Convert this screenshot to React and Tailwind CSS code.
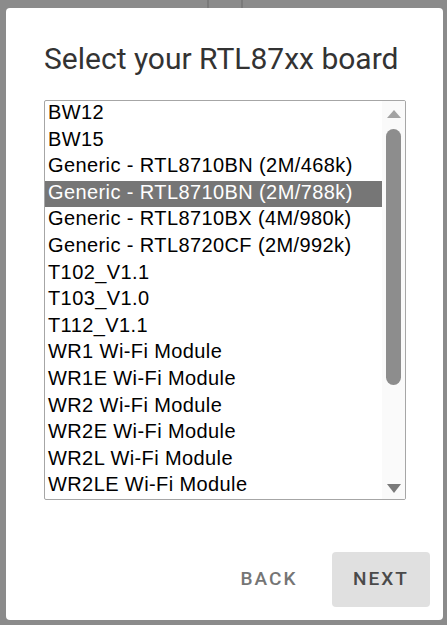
import React from 'react';

const boards = [
    'BW12',
    'BW15',
    'Generic - RTL8710BN (2M/468k)',
    'Generic - RTL8710BN (2M/788k)',
    'Generic - RTL8710BX (4M/980k)',
    'Generic - RTL8720CF (2M/992k)',
    'T102_V1.1',
    'T103_V1.0',
    'T112_V1.1',
    'WR1 Wi-Fi Module',
    'WR1E Wi-Fi Module',
    'WR2 Wi-Fi Module',
    'WR2E Wi-Fi Module',
    'WR2L Wi-Fi Module',
    'WR2LE Wi-Fi Module',
];

const selected = 'Generic - RTL8710BN (2M/788k)';

const App = () => {
    return (
        <div className="w-[447px] h-[625px] bg-[#8b8b8b] overflow-hidden flex flex-col">
            {/* page behind the overlay */}
            <div className="flex h-[8px] shrink-0">
                <div className="w-[207px]" />
                <div className="w-[2px] bg-[#7a7a7a]" />
                <div className="w-[32px]" />
                <div className="w-[2px] bg-[#7a7a7a]" />
            </div>

            <div className="ml-[6px] w-[437px] h-[612px] bg-white rounded-[4px] flex flex-col">
                <div className="px-[38px] pt-[33px]">
                    <h1 className="font-['Roboto',sans-serif] text-[30px] leading-[36px] text-[#333333] whitespace-nowrap">
                        Select your RTL87xx board
                    </h1>

                    <div className="mt-[23px] w-[362px] h-[400px] border border-[#a6a6a6] rounded-[2px] flex overflow-hidden">
                        <div className="flex-1 flex flex-col font-['Liberation_Sans',Arial,sans-serif] text-[20px] leading-[22px] tracking-[0.4px] text-black">
                            {boards.map((b) => (
                                <div
                                    key={b}
                                    className={
                                        b === selected
                                            ? 'h-[26.6px] shrink-0 pl-[3px] whitespace-nowrap bg-[#767676] text-white'
                                            : 'h-[26.6px] shrink-0 pl-[3px] whitespace-nowrap'
                                    }
                                >
                                    {b}
                                </div>
                            ))}
                        </div>

                        <div className="w-[23px] bg-[#fafafa] flex flex-col items-center pt-[9px] pb-[6px]">
                            <svg width="14" height="8" viewBox="0 0 14 8">
                                <polygon points="7,0 14,8 0,8" fill="#a3a3a3" />
                            </svg>
                            <div className="mt-[11px] w-[15px] h-[256px] rounded-full bg-[#8d8d8d]" />
                            <div className="flex-1" />
                            <svg width="14" height="9" viewBox="0 0 14 9">
                                <polygon points="0,0 14,0 7,9" fill="#7a7a7a" />
                            </svg>
                        </div>
                    </div>
                </div>

                <div className="flex-1" />

                <div className="flex justify-end gap-[14px] pr-[13px] pb-[13px] font-['Roboto',sans-serif] font-medium text-[19px] tracking-[2px]">
                    <button className="w-[98px] h-[55px] rounded-[4px] text-[#757575]">BACK</button>
                    <button className="w-[98px] h-[55px] rounded-[4px] bg-[#e0e0e0] text-[#4a4a4a]">NEXT</button>
                </div>
            </div>
        </div>
    );
};

export default App;
